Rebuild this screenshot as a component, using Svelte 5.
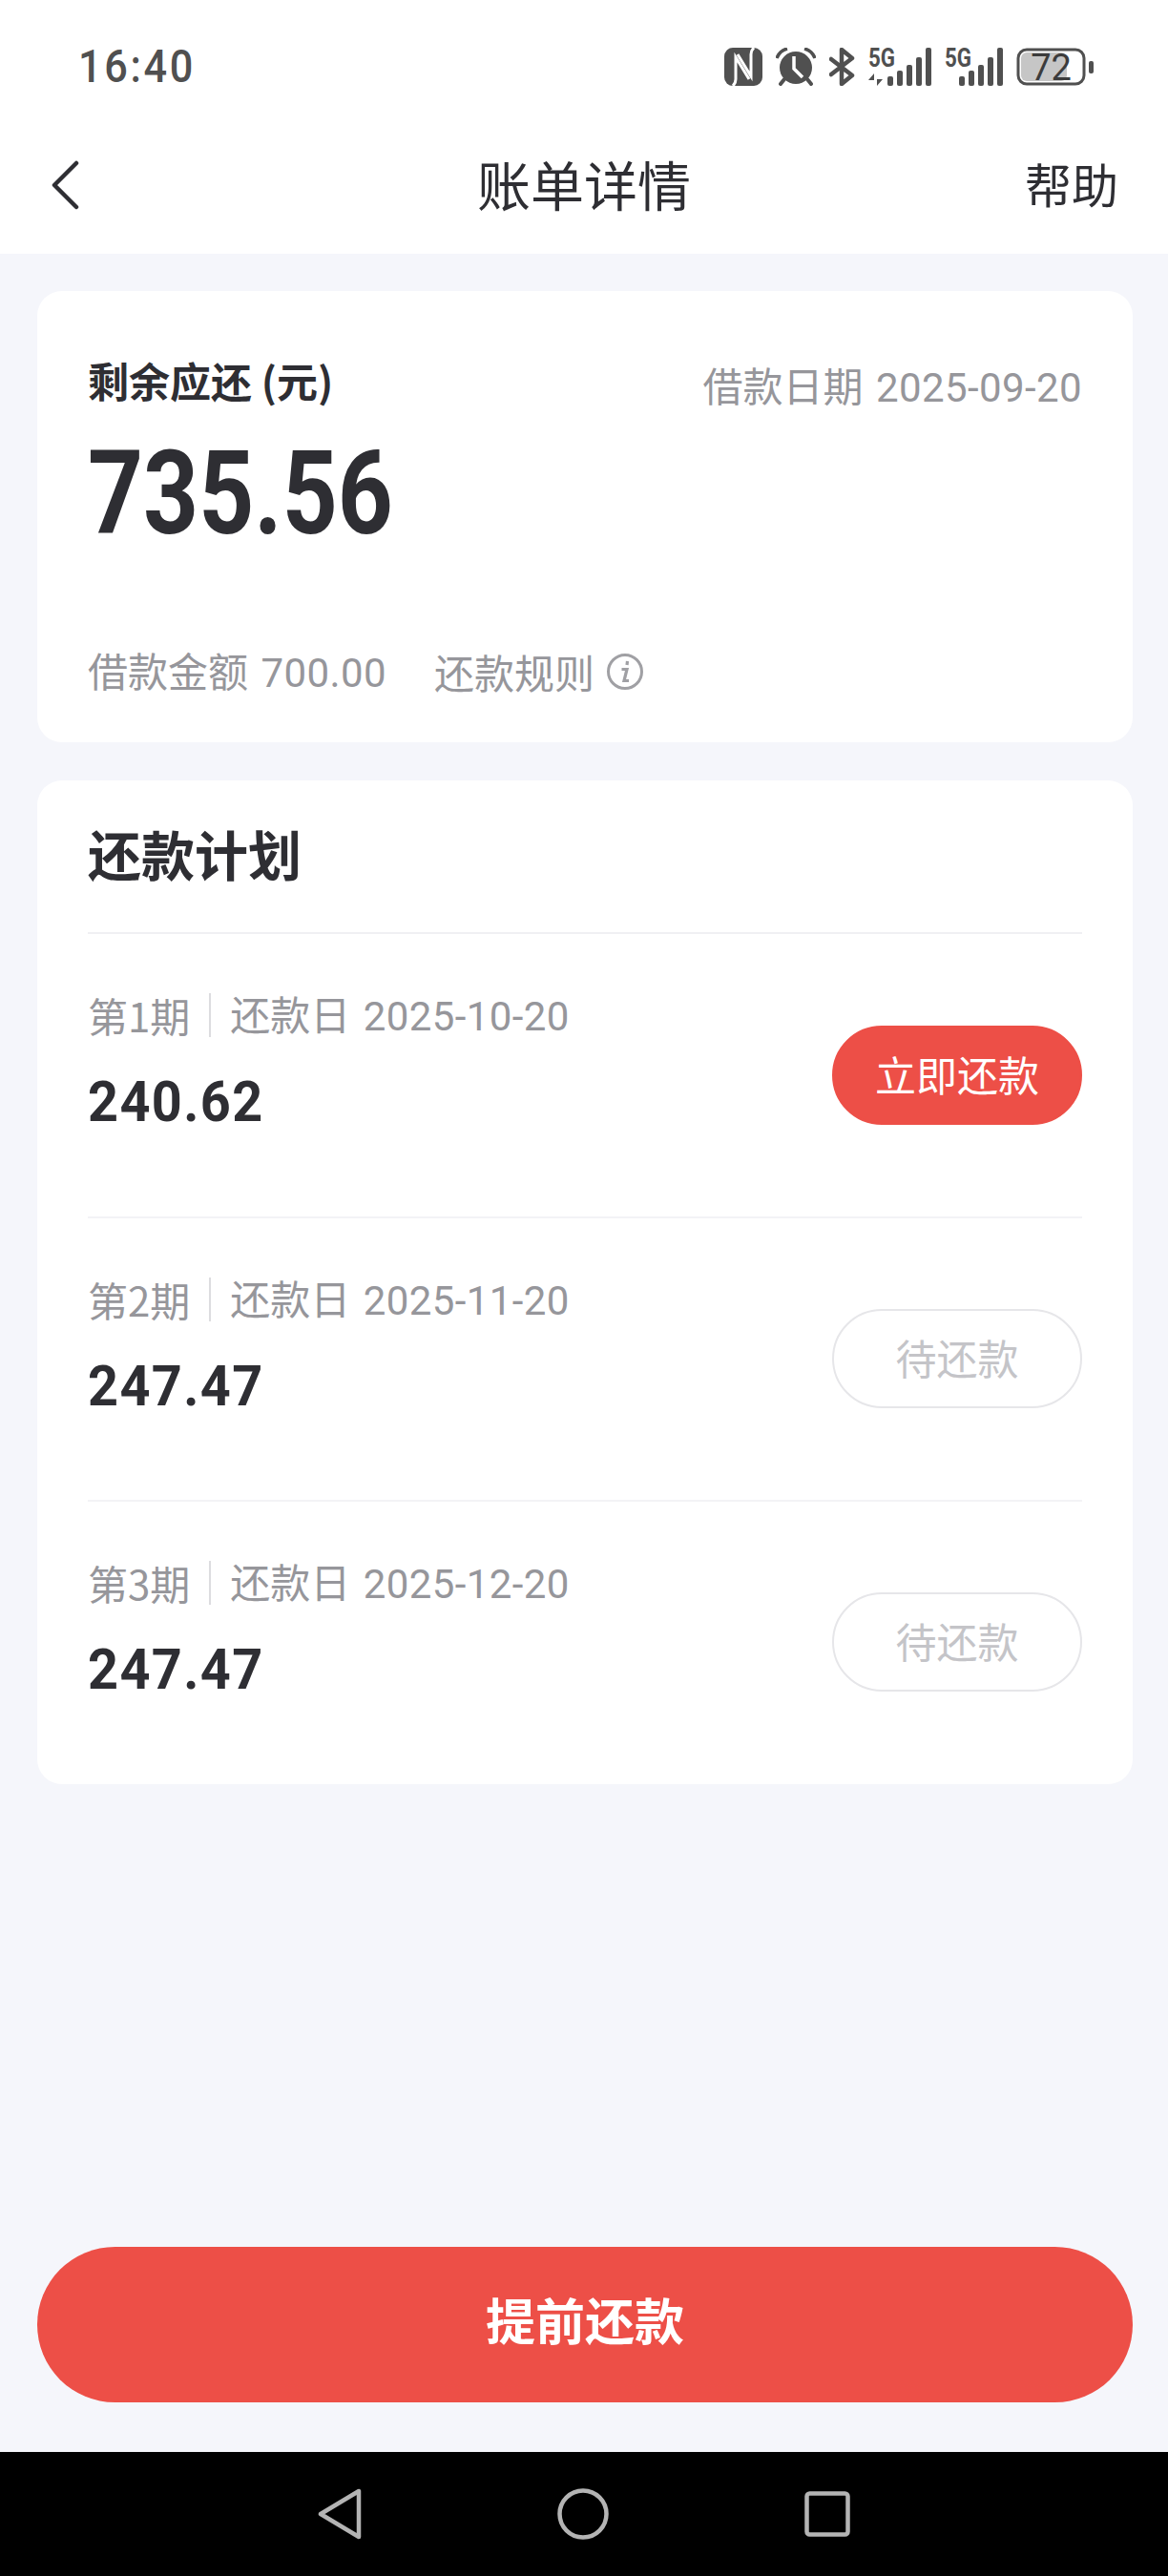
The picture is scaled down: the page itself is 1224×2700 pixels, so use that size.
<script lang="ts">
  const plans = [
    { no: 1, date: '2025-10-20', amount: '240.62', action: '立即还款', active: true },
    { no: 2, date: '2025-11-20', amount: '247.47', action: '待还款', active: false },
    { no: 3, date: '2025-12-20', amount: '247.47', action: '待还款', active: false },
  ];
  const cellBars = [
    { x: 0, h: 10 },
    { x: 10, h: 16 },
    { x: 20, h: 22 },
    { x: 30, h: 30 },
    { x: 40, h: 40 },
  ];
</script>

<div class="page">
  <div class="status">
    <span class="time">16:40</span>
    <div class="status-icons">
      <svg width="40" height="40" viewBox="0 0 40 40">
        <rect width="40" height="40" rx="9" fill="#505050" />
        <path d="M9 40 Q12 37 12 33 V10 L26 33" fill="none" stroke="#fff" stroke-width="3" />
        <path d="M31 0 Q28 3 28 7 V30 L14 7" fill="none" stroke="#fff" stroke-width="3" />
      </svg>
      <svg width="42" height="40" viewBox="0 0 42 40">
        <circle cx="21" cy="21" r="17" fill="#505050" />
        <path d="M19 9 V22 L28 31" fill="none" stroke="#fff" stroke-width="3.5" />
        <path d="M1 11 Q4 3 12 1 M41 11 Q38 3 30 1" fill="none" stroke="#505050" stroke-width="3.5" />
        <path d="M9 33 L5 38 M33 33 L37 38" stroke="#505050" stroke-width="4" stroke-linecap="round" />
      </svg>
      <svg width="27" height="40" viewBox="0 0 27 40">
        <path d="M2 12 L24 29 L13 38 V2 L24 11 L2 28" fill="none" stroke="#505050" stroke-width="4.5" stroke-linejoin="round" stroke-linecap="round" />
      </svg>
      <svg class="signal" width="66" height="40" viewBox="0 0 66 40">
        <text x="0" y="20" class="five-g" textLength="28" lengthAdjust="spacingAndGlyphs">5G</text>
        <path d="M6 40 V27 L0 34 H6 Z M9 27 V40 L15 33 H9 Z" fill="#505050" />
        {#each cellBars as bar}
          <rect x={bar.x + 20} y={40 - bar.h} width="6" height={bar.h} rx="2" fill="#505050" />
        {/each}
      </svg>
      <svg class="signal" width="61" height="40" viewBox="0 0 61 40">
        <text x="0" y="20" class="five-g" textLength="28" lengthAdjust="spacingAndGlyphs">5G</text>
        {#each cellBars as bar}
          <rect x={bar.x + 15} y={40 - bar.h} width="6" height={bar.h} rx="2" fill="#505050" />
        {/each}
      </svg>
      <svg class="signal" width="81" height="40" viewBox="0 0 81 40">
        <rect x="2" y="2" width="69" height="36" rx="9" fill="#fff" stroke="#505050" stroke-width="3" />
        <rect x="5" y="5" width="48" height="30" rx="6" fill="#c6c6c6" />
        <rect x="76" y="14" width="5" height="13" rx="2" fill="#505050" />
        <text x="36.5" y="34" class="batt">72</text>
      </svg>
    </div>
  </div>

  <header class="nav">
    <svg class="back" width="32" height="52" viewBox="0 0 32 52">
      <path d="M28 3 L5 26 L28 49" fill="none" stroke="#2e2e33" stroke-width="4.5" stroke-linecap="round" stroke-linejoin="round" />
    </svg>
    <h1>账单详情</h1>
    <span class="help">帮助</span>
  </header>

  <main>
    <section class="card summary">
      <div class="summary-top">
        <div>
          <div class="remain-label">剩余应还 (元)</div>
          <div class="remain">735.56</div>
        </div>
        <div class="borrow-date">借款日期 <span class="num">2025-09-20</span></div>
      </div>
      <div class="summary-foot">
        <span>借款金额 <span class="num">700.00</span></span>
        <span class="rules">还款规则
          <svg width="40" height="40" viewBox="0 0 40 40">
            <circle cx="20" cy="20" r="17.5" fill="none" stroke="#a0a0a4" stroke-width="3" />
            <path d="M22.5 9 l-.5 4 M16.5 17.5 h5.5 L19 29.5 h5" fill="none" stroke="#a0a0a4" stroke-width="3.2" />
          </svg>
        </span>
      </div>
    </section>

    <section class="card plan">
      <h2>还款计划</h2>
      {#each plans as p}
        <div class="row">
          <div class="row-text">
            <div class="row-meta">
              <span>第{p.no}期</span>
              <i></i>
              <span>还款日 <span class="num">{p.date}</span></span>
            </div>
            <div class="row-amount">{p.amount}</div>
          </div>
          <button class="pill" class:active={p.active}>{p.action}</button>
        </div>
      {/each}
    </section>
  </main>

  <div class="foot">
    <button class="prepay">提前还款</button>
  </div>

  <div class="sysnav">
    <svg width="46" height="54" viewBox="0 0 46 54">
      <path d="M43 3 V51 L3 27 Z" fill="none" stroke="#b4b4b4" stroke-width="4.5" stroke-linejoin="round" />
    </svg>
    <svg width="54" height="54" viewBox="0 0 54 54">
      <circle cx="27" cy="27" r="24.5" fill="none" stroke="#b4b4b4" stroke-width="4.5" />
    </svg>
    <svg width="48" height="48" viewBox="0 0 48 48">
      <rect x="2.5" y="2.5" width="43" height="43" rx="3" fill="none" stroke="#b4b4b4" stroke-width="4.5" />
    </svg>
  </div>
</div>

<style>
  :global(body) {
    margin: 0;
    background: #f5f6fb;
  }

  .page {
    width: 1224px;
    height: 2700px;
    display: flex;
    flex-direction: column;
    background: #f5f6fb;
    font-family: 'Noto Sans CJK SC', Roboto, sans-serif;
    color: #2e2e33;
  }

  .status {
    height: 140px;
    box-sizing: border-box;
    padding: 50px 78px 0 82px;
    background: #fff;
    display: flex;
    justify-content: space-between;
    align-items: flex-start;
  }

  .time {
    font-family: Roboto, sans-serif;
    font-weight: 500;
    font-size: 48px;
    line-height: 40px;
    letter-spacing: 3px;
    color: #505050;
    display: inline-block;
    transform: scaleX(0.9);
    transform-origin: left center;
  }

  .status-icons {
    display: flex;
    gap: 14px;
  }

  .signal {
    overflow: visible;
  }

  .five-g {
    font-family: Roboto, sans-serif;
    font-weight: 700;
    font-size: 27px;
    fill: #505050;
  }

  .batt {
    font-family: Roboto, sans-serif;
    font-size: 38px;
    fill: #3c3c3c;
    text-anchor: middle;
  }

  .nav {
    height: 126px;
    box-sizing: border-box;
    padding: 0 52px 24px 52px;
    background: #fff;
    display: flex;
    align-items: center;
    justify-content: space-between;
    position: relative;
  }

  .back {
    margin-top: 5px;
  }

  .nav h1 {
    position: absolute;
    left: 0;
    right: 0;
    text-align: center;
    margin: 0;
    font-size: 56px;
    font-weight: 400;
  }

  .help {
    font-size: 49px;
  }

  main {
    flex: 1;
    padding: 39px 37px 0 39px;
    display: flex;
    flex-direction: column;
    gap: 40px;
  }

  .card {
    background: #fff;
    border-radius: 26px;
    padding: 0 53px;
  }

  .summary {
    height: 473px;
    box-sizing: border-box;
    padding-top: 68px;
    padding-bottom: 44px;
    display: flex;
    flex-direction: column;
    justify-content: space-between;
  }

  .summary-top {
    display: flex;
    justify-content: space-between;
    align-items: flex-start;
  }

  .remain-label {
    font-size: 43px;
    font-weight: 700;
    line-height: 50px;
  }

  .remain {
    font-family: Roboto, sans-serif;
    font-weight: 700;
    font-size: 122px;
    line-height: 130px;
    margin-top: 30px;
    transform: scaleX(0.83);
    transform-origin: left center;
  }

  .borrow-date {
    font-size: 42px;
    line-height: 60px;
    color: #96969b;
  }

  .num {
    font-family: Roboto, sans-serif;
    font-weight: 400;
    letter-spacing: 0.4px;
    margin-left: 4px;
  }

  .summary-foot {
    display: flex;
    gap: 50px;
    font-size: 42px;
    line-height: 56px;
    color: #96969b;
  }

  .rules {
    display: inline-flex;
    align-items: center;
    gap: 12px;
  }

  .plan {
    padding-bottom: 2px;
  }

  .plan h2 {
    margin: 0;
    height: 161px;
    box-sizing: border-box;
    padding-bottom: 8px;
    border-bottom: 2px solid #f0f0f3;
    display: flex;
    align-items: center;
    font-size: 56px;
    font-weight: 700;
  }

  .row {
    height: 297.5px;
    box-sizing: border-box;
    display: flex;
    justify-content: space-between;
    align-items: center;
    border-bottom: 2px solid #f3f3f6;
  }

  .row:last-child {
    height: 294px;
    border-bottom: none;
  }

  .row-text {
    padding-bottom: 31px;
  }

  .row-meta {
    display: flex;
    align-items: center;
    gap: 20px;
    font-size: 42px;
    line-height: 60px;
    color: #96969b;
  }

  .row-meta i {
    width: 2px;
    height: 46px;
    background: #dcdcdf;
  }

  .row-amount {
    font-family: Roboto, sans-serif;
    font-weight: 700;
    font-size: 60px;
    line-height: 70px;
    letter-spacing: 1.5px;
    margin-top: 24px;
    transform: scaleX(0.93);
    transform-origin: left center;
  }

  .pill {
    width: 262px;
    height: 104px;
    border-radius: 52px;
    border: 2px solid #e6e6e9;
    background: #fff;
    color: #c4c4c8;
    font: inherit;
    font-size: 43px;
    padding: 0 0 4px;
  }

  .pill.active {
    background: #ed4f47;
    border-color: #ed4f47;
    color: #fff;
  }

  .foot {
    padding: 0 37px 52px 39px;
  }

  .prepay {
    width: 100%;
    height: 163px;
    border: none;
    border-radius: 82px;
    background: #ed4f47;
    color: #fff;
    font: inherit;
    font-size: 52px;
    font-weight: 700;
    padding: 0 0 12px;
  }

  .sysnav {
    height: 130px;
    background: #000;
    display: flex;
    justify-content: center;
    align-items: center;
    gap: 205px;
  }
</style>
